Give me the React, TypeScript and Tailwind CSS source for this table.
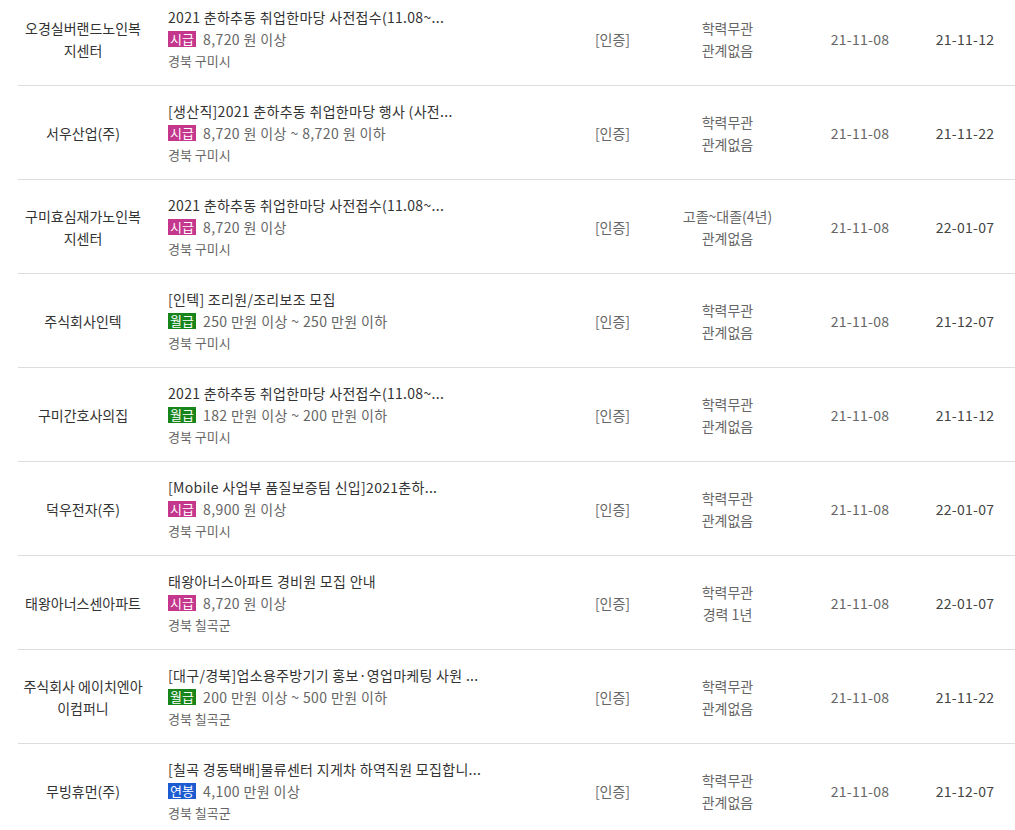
const font = { fontFamily: '"Noto Sans CJK KR", "Noto Sans", sans-serif' }

type PayType = '시급' | '월급' | '연봉'

interface Job {
  company: string
  title: string
  payType: PayType
  pay: string
  location: string
  education: string
  career: string
  regDate: string
  endDate: string
}

const jobs: Job[] = [
  {
    company: '오경실버랜드노인복지센터',
    title: '2021 춘하추동 취업한마당 사전접수(11.08~...',
    payType: '시급',
    pay: '8,720 원 이상',
    location: '경북 구미시',
    education: '학력무관',
    career: '관계없음',
    regDate: '21-11-08',
    endDate: '21-11-12',
  },
  {
    company: '서우산업(주)',
    title: '[생산직]2021 춘하추동 취업한마당 행사 (사전...',
    payType: '시급',
    pay: '8,720 원 이상 ~ 8,720 원 이하',
    location: '경북 구미시',
    education: '학력무관',
    career: '관계없음',
    regDate: '21-11-08',
    endDate: '21-11-22',
  },
  {
    company: '구미효심재가노인복지센터',
    title: '2021 춘하추동 취업한마당 사전접수(11.08~...',
    payType: '시급',
    pay: '8,720 원 이상',
    location: '경북 구미시',
    education: '고졸~대졸(4년)',
    career: '관계없음',
    regDate: '21-11-08',
    endDate: '22-01-07',
  },
  {
    company: '주식회사인텍',
    title: '[인텍] 조리원/조리보조 모집',
    payType: '월급',
    pay: '250 만원 이상 ~ 250 만원 이하',
    location: '경북 구미시',
    education: '학력무관',
    career: '관계없음',
    regDate: '21-11-08',
    endDate: '21-12-07',
  },
  {
    company: '구미간호사의집',
    title: '2021 춘하추동 취업한마당 사전접수(11.08~...',
    payType: '월급',
    pay: '182 만원 이상 ~ 200 만원 이하',
    location: '경북 구미시',
    education: '학력무관',
    career: '관계없음',
    regDate: '21-11-08',
    endDate: '21-11-12',
  },
  {
    company: '덕우전자(주)',
    title: '[Mobile 사업부 품질보증팀 신입]2021춘하...',
    payType: '시급',
    pay: '8,900 원 이상',
    location: '경북 구미시',
    education: '학력무관',
    career: '관계없음',
    regDate: '21-11-08',
    endDate: '22-01-07',
  },
  {
    company: '태왕아너스센아파트',
    title: '태왕아너스아파트 경비원 모집 안내',
    payType: '시급',
    pay: '8,720 원 이상',
    location: '경북 칠곡군',
    education: '학력무관',
    career: '경력 1년',
    regDate: '21-11-08',
    endDate: '22-01-07',
  },
  {
    company: '주식회사 에이치엔아이컴퍼니',
    title: '[대구/경북]업소용주방기기 홍보·영업마케팅 사원 ...',
    payType: '월급',
    pay: '200 만원 이상 ~ 500 만원 이하',
    location: '경북 칠곡군',
    education: '학력무관',
    career: '관계없음',
    regDate: '21-11-08',
    endDate: '21-11-22',
  },
  {
    company: '무빙휴먼(주)',
    title: '[칠곡 경동택배]물류센터 지게차 하역직원 모집합니...',
    payType: '연봉',
    pay: '4,100 만원 이상',
    location: '경북 칠곡군',
    education: '학력무관',
    career: '관계없음',
    regDate: '21-11-08',
    endDate: '21-12-07',
  },
]

function PayBadge({ type }: { type: PayType }) {
  const color =
    type === '시급'
      ? 'bg-[#c4378d]'
      : type === '월급'
        ? 'bg-[#17851a]'
        : 'bg-[#1c5cd0]'
  return (
    <span
      className={`${color} inline-flex h-[16px] w-[28px] items-center justify-center text-[13px] leading-none tracking-normal text-white`}
    >
      {type}
    </span>
  )
}

function JobRow({ job }: { job: Job }) {
  return (
    <li className="flex h-[94px] items-center border-b border-[#dddddd] text-[14px] leading-[22px]">
      <div className="w-[130px] shrink-0 px-[5px] text-center text-[#333]">
        {job.company}
      </div>
      <div className="w-[412px] shrink-0 pl-[20px]">
        <p className="whitespace-nowrap tracking-[0.3px] text-[#333]">
          {job.title}
        </p>
        <p className="flex items-center gap-[7px] whitespace-nowrap tracking-[0.4px] text-[#666]">
          <PayBadge type={job.payType} />
          <span>{job.pay}</span>
        </p>
        <p className="text-[13px] text-[#666]">{job.location}</p>
      </div>
      <div className="w-[105px] shrink-0 text-center text-[#666]">[인증]</div>
      <div className="w-[125px] shrink-0 text-center text-[#666]">
        <p>{job.education}</p>
        <p>{job.career}</p>
      </div>
      <div className="w-[140px] shrink-0 text-center tracking-[0.3px] text-[#666]">
        {job.regDate}
      </div>
      <div className="w-[70px] shrink-0 text-center tracking-[0.3px] text-[#444]">
        {job.endDate}
      </div>
    </li>
  )
}

export default function App() {
  return (
    <div className="h-[830px] overflow-hidden bg-white" style={font}>
      <ul className="-mt-[8px] ml-[18px]">
        {jobs.map((job) => (
          <JobRow key={job.company} job={job} />
        ))}
      </ul>
    </div>
  )
}
